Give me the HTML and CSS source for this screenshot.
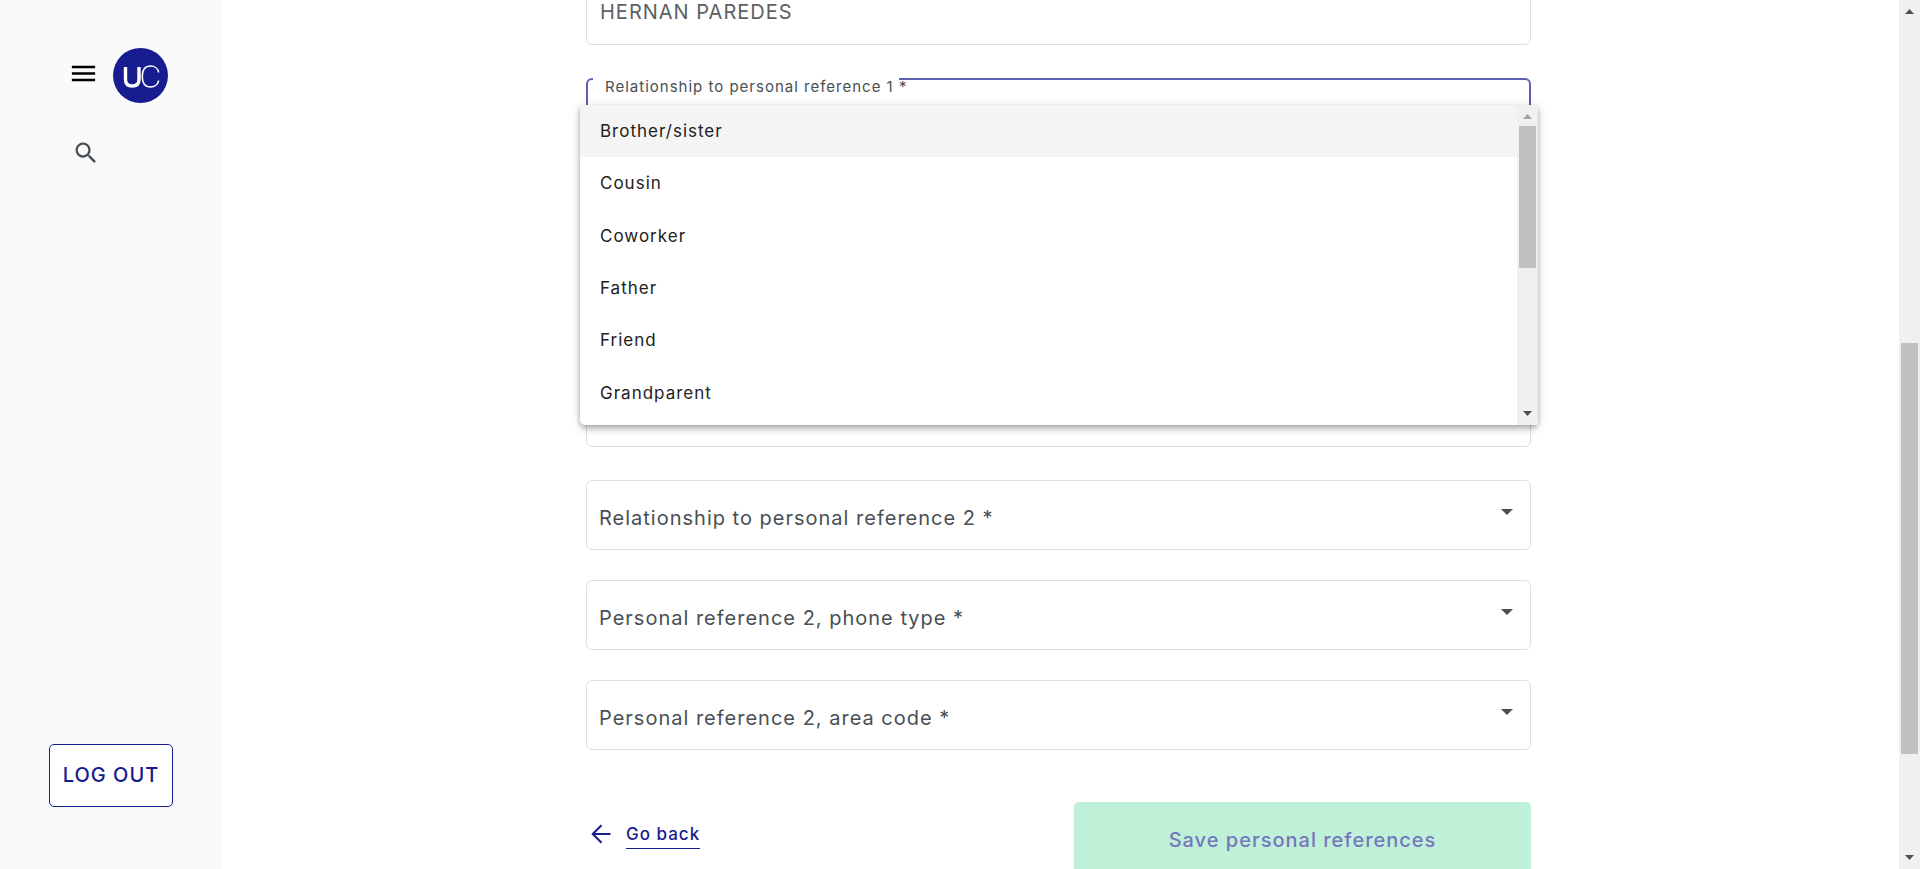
FILE: index.html
```html
<!DOCTYPE html>
<html lang="en">
<head>
<meta charset="utf-8">
<meta name="viewport" content="width=device-width, initial-scale=1">
<title>Personal references</title>
<link rel="stylesheet" href="styles.css">
</head>
<body>
<div class="app">
  <aside class="sidebar">
    <div class="brand">
      <button class="icon-button" type="button" aria-label="Menu">
        <svg class="icon-menu" viewBox="0 0 24 24"><path d="M3 18h18v-2H3v2zm0-5h18v-2H3v2zm0-7v2h18V6H3z"/></svg>
      </button>
      <a class="logo" href="#" aria-label="Home">
        <svg viewBox="0 0 55 55">
          <circle cx="27.5" cy="27.5" r="27.5" fill="#171c8f"/>
          <path d="M12.500 19v12.500q0 6.500 6.750 6.500t6.750-6.500V19" fill="none" stroke="#fff" stroke-width="3.400"/>
          <path d="M45.700 24.500C45 20.500 41.500 18 37.700 18C32.500 18 29.300 21.500 29.300 28.500S32.500 39 37.700 39C41.500 39 45 36.500 45.700 32.500" fill="none" stroke="#fff" stroke-width="1.500"/>
        </svg>
      </a>
    </div>
    <button class="icon-button search" type="button" aria-label="Search">
      <svg class="icon-search" viewBox="0 0 24 24"><path d="M15.500 14h-.79l-.28-.27A6.471 6.471 0 0 0 16 9.500 6.500 6.500 0 1 0 9.500 16c1.610 0 3.090-.59 4.230-1.570l.27.28v.79l5 4.990L20.490 19l-4.990-5zm-6 0C7.010 14 5 11.990 5 9.500S7.010 5 9.500 5 14 7.010 14 9.500 11.990 14 9.500 14z"/></svg>
    </button>
    <button class="logout" type="button">LOG OUT</button>
  </aside>

  <main class="content">
    <form class="form">
      <div class="field field-text">
        <input class="control" type="text" value="HERNAN PAREDES" aria-label="Name of personal reference 1">
      </div>

      <div class="field field-open">
        <select class="control" id="relationship1"></select>
        <span class="notch"></span>
        <label class="label-float" for="relationship1">Relationship to personal reference 1 *</label>
        <div class="panel">
          <ul class="options" role="listbox">
            <li class="option option-active" role="option" aria-selected="true">Brother/sister</li>
            <li class="option" role="option">Cousin</li>
            <li class="option" role="option">Coworker</li>
            <li class="option" role="option">Father</li>
            <li class="option" role="option">Friend</li>
            <li class="option" role="option">Grandparent</li>
          </ul>
          <div class="scrollbar">
            <svg class="scroll-arrow arrow-muted" viewBox="0 0 21 21"><path d="M6 14h9L10.500 9z"/></svg>
            <div class="scroll-track"><div class="panel-thumb"></div></div>
            <svg class="scroll-arrow" viewBox="0 0 21 21"><path d="M6 7h9l-4.500 5z"/></svg>
          </div>
        </div>
      </div>

      <div class="field"><select class="control" aria-label="Phone type"></select></div>
      <div class="field"><select class="control" aria-label="Area code"></select></div>

      <div class="field field-text">
        <input class="control" type="text" aria-label="Name of personal reference 2">
      </div>

      <div class="field">
        <select class="control" id="relationship2"></select>
        <label class="label" for="relationship2">Relationship to personal reference 2 *</label>
        <svg class="caret" viewBox="0 0 12 6"><path d="M0 0h12L6 6z"/></svg>
      </div>
      <div class="field">
        <select class="control" id="phone2"></select>
        <label class="label" for="phone2">Personal reference 2, phone type *</label>
        <svg class="caret" viewBox="0 0 12 6"><path d="M0 0h12L6 6z"/></svg>
      </div>
      <div class="field">
        <select class="control" id="area2"></select>
        <label class="label" for="area2">Personal reference 2, area code *</label>
        <svg class="caret" viewBox="0 0 12 6"><path d="M0 0h12L6 6z"/></svg>
      </div>

      <div class="actions">
        <a class="back" href="#">
          <svg class="icon-back" viewBox="0 0 20 20"><path d="M19.500 10H2M10.500 1.200L1.700 10l8.800 8.800" fill="none" stroke="#171c8f" stroke-width="2"/></svg>
          <span class="back-text">Go back</span>
        </a>
        <button class="save" type="submit" disabled>Save personal references</button>
      </div>
    </form>
  </main>

  <div class="scrollbar">
    <svg class="scroll-arrow" viewBox="0 0 21 21"><path d="M6 14h9L10.500 9z"/></svg>
    <div class="scroll-track page-track"><div class="page-thumb"></div></div>
    <svg class="scroll-arrow" viewBox="0 0 21 21"><path d="M6 7h9l-4.500 5z"/></svg>
  </div>
</div>
</body>
</html>
```

FILE: styles.css
```css
* {
  box-sizing: border-box;
}

body {
  margin: 0;
  background: #fff;
  color: #484f54;
  font-family: Inter, "Liberation Sans", sans-serif;
  font-size: 20px;
  letter-spacing: 1px;
}

button,
input,
select {
  font: inherit;
  letter-spacing: inherit;
}

.app {
  display: flex;
  height: 100vh;
  overflow: hidden;
}

.sidebar {
  display: flex;
  flex: none;
  flex-direction: column;
  align-items: flex-start;
  width: 223px;
  padding: 48px 49px 62px;
  background: #fafafa;
}

.brand {
  display: flex;
  align-items: center;
  gap: 14px;
  padding-left: 19px;
}

.icon-button {
  display: block;
  padding: 0;
  border: 0;
  background: none;
}

.icon-button svg,
.logo svg {
  display: block;
}

.icon-menu {
  width: 31px;
  height: 31px;
  margin-bottom: 4px;
}

.logo svg {
  width: 55px;
  height: 55px;
}

.search {
  margin: 36px 0 0 23px;
}

.icon-search {
  width: 28px;
  height: 28px;
  fill: #484f54;
}

.logout {
  width: 124px;
  height: 63px;
  margin-top: auto;
  padding: 0 0 2px;
  border: 1px solid #171c8f;
  border-radius: 5px;
  background: #fff;
  color: #171c8f;
  font-weight: 500;
}

.content {
  flex: 1;
  min-width: 0;
  padding-right: 5px;
}

.form {
  display: flex;
  flex-direction: column;
  gap: 30px;
  max-width: 945px;
  margin: -24px auto 0;
}

.field {
  position: relative;
  height: 70px;
}

.field-text {
  height: 69px;
  margin-bottom: 3px;
}

.control {
  display: block;
  width: 100%;
  height: 100%;
  padding: 2px 13px 0;
  border: 1px solid #dedfe0;
  border-radius: 6px;
  outline: 0;
  background: #fff;
  color: #5b6165;
  appearance: none;
}

.label {
  position: absolute;
  top: 3px;
  left: 13px;
  line-height: 70px;
  pointer-events: none;
}

.caret {
  position: absolute;
  top: 29px;
  right: 18px;
  width: 12px;
  height: 6px;
  fill: #484f54;
}

.field-open {
  z-index: 1;
}

.field-open .control {
  border: 2px solid #5d60b1;
}

.notch {
  position: absolute;
  top: 0;
  left: 7px;
  width: 306px;
  height: 2px;
  background: #fff;
}

.label-float {
  position: absolute;
  top: 0;
  left: 19px;
  font-size: 15px;
  line-height: 17px;
}

.panel {
  position: absolute;
  top: 27px;
  right: -7px;
  left: -6px;
  display: flex;
  height: 320px;
  border-radius: 0 0 5px 5px;
  background: #fff;
  box-shadow: 0 2px 5px -1px rgba(0, 0, 0, 0.24), 0 5px 6px rgba(0, 0, 0, 0.14), 0 1px 12px rgba(0, 0, 0, 0.12);
}

.options {
  display: grid;
  flex: 1;
  grid-auto-rows: 1fr;
  height: 314px;
  margin: 0;
  padding: 0;
  list-style: none;
}

.option {
  display: flex;
  align-items: center;
  padding: 0 20px;
  color: #212121;
  font-size: 17px;
}

.option-active {
  background: #f4f4f4;
}

.scrollbar {
  display: flex;
  flex: none;
  flex-direction: column;
  width: 21px;
  background: #f0f0f0;
}

.scroll-arrow {
  width: 21px;
  height: 21px;
  fill: #505050;
}

.arrow-muted {
  fill: #a3a3a3;
}

.scroll-track {
  flex: 1;
  padding: 0 2px;
}

.panel-thumb {
  height: 51%;
  background: #c1c1c1;
}

.page-track {
  display: grid;
  grid-template-rows: 322fr 411fr 94fr;
}

.page-thumb {
  grid-row: 2;
  background: #c1c1c1;
}

.actions {
  display: grid;
  grid-template-columns: 1fr 457px;
  align-items: start;
  margin-top: 22px;
}

.back {
  display: flex;
  align-items: center;
  justify-self: start;
  gap: 15px;
  margin: 18px 0 0 5px;
  color: #171c8f;
  font-size: 17px;
  font-weight: 500;
  text-decoration: none;
}

.icon-back {
  width: 20px;
  height: 20px;
  margin-bottom: 2px;
}

.back-text {
  border-bottom: 1px solid #171c8f;
  line-height: 28px;
}

.save {
  height: 76px;
  border: 0;
  border-radius: 5px;
  background: #bff0d8;
  color: #7677bc;
  font-weight: 500;
}
```
